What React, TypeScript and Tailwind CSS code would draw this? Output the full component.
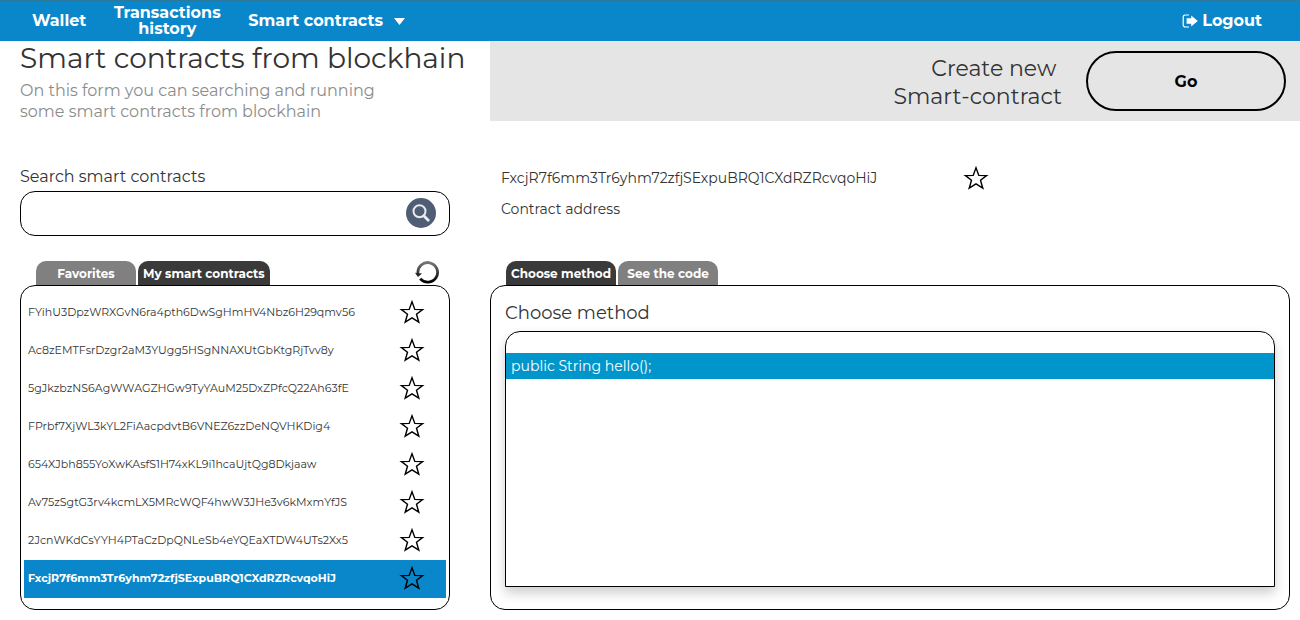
import { useState } from 'react';

const contracts = [
  'FYihU3DpzWRXGvN6ra4pth6DwSgHmHV4Nbz6H29qmv56',
  'Ac8zEMTFsrDzgr2aM3YUgg5HSgNNAXUtGbKtgRjTvv8y',
  '5gJkzbzNS6AgWWAGZHGw9TyYAuM25DxZPfcQ22Ah63fE',
  'FPrbf7XjWL3kYL2FiAacpdvtB6VNEZ6zzDeNQVHKDig4',
  '654XJbh855YoXwKAsfS1H74xKL9i1hcaUjtQg8Dkjaaw',
  'Av75zSgtG3rv4kcmLX5MRcWQF4hwW3JHe3v6kMxmYfJS',
  '2JcnWKdCsYYH4PTaCzDpQNLeSb4eYQEaXTDW4UTs2Xx5',
  'FxcjR7f6mm3Tr6yhm72zfjSExpuBRQ1CXdRZRcvqoHiJ',
];

const methods = ['public String hello();'];

const StarIcon = () => (
  <svg width="26" height="26" viewBox="0 0 26 26" fill="none" stroke="#000" strokeWidth="1.4">
    <path d="M13 2.8 L15.8 10.4 L23.6 10.6 L17.5 15.3 L19.8 23.2 L13 18.8 L6.2 23.2 L8.5 15.3 L2.4 10.6 L10.2 10.4 Z" />
  </svg>
);

const SearchIcon = () => (
  <svg width="30" height="30" viewBox="0 0 30 30" fill="none">
    <circle cx="15" cy="15" r="15" fill="#4f5d75" />
    <circle cx="13.5" cy="13.2" r="6" stroke="#e8ebf0" strokeWidth="2" />
    <path d="M17.8 17.8 L22.2 22.2" stroke="#e8ebf0" strokeWidth="2.8" strokeLinecap="round" />
  </svg>
);

const RefreshIcon = () => (
  <svg width="24" height="24" viewBox="0 0 24 24" fill="none">
    <defs>
      <linearGradient id="ring" x1="0" y1="0" x2="0" y2="1">
        <stop offset="0" stopColor="#777" />
        <stop offset="1" stopColor="#000" />
      </linearGradient>
    </defs>
    <path d="M3 12.4 A9.8 9.8 0 1 1 5.2 17.6" stroke="url(#ring)" strokeWidth="2.8" />
    <path d="M0 11.8 L7 12.6 L3 16 Z" fill="#222" />
  </svg>
);

const LogoutIcon = () => (
  <svg width="16" height="14" viewBox="0 0 16 14" fill="none">
    <path d="M7 1 H3.5 Q1.2 1 1.2 3.2 V10.8 Q1.2 13 3.5 13 H7" stroke="#fff" strokeWidth="1.2" />
    <path d="M4.6 4.2 H9.2 V1.6 L15.8 7 L9.2 12.4 V9.8 H4.6 Z" fill="#fff" />
  </svg>
);

type TabProps = {
  label: string;
  active: boolean;
  onClick: () => void;
};

const Tab = ({ label, active, onClick }: TabProps) => (
  <button
    type="button"
    role="tab"
    aria-selected={active}
    onClick={onClick}
    className={`h-6 min-w-[100px] rounded-t-[10px] px-[5px] pt-[2px] text-xs font-bold text-white ${
      active ? 'bg-[#3a3a3a]' : 'bg-[#808080]'
    }`}
  >
    {label}
  </button>
);

export default function App() {
  const [listTab, setListTab] = useState('my');
  const [methodTab, setMethodTab] = useState('method');
  const [selected, setSelected] = useState(contracts[7]);
  const [method, setMethod] = useState(methods[0]);

  return (
    <div className="bg-white font-['Montserrat',Inter,sans-serif] text-[#333]">
      {/* Header */}
      <header className="flex h-[41px] items-center justify-between border-t border-[#2b7a9c] bg-[#0a86ca] pr-[38px] pl-8 text-base leading-4 font-bold text-white">
        <nav className="flex items-center gap-[26px]">
          <a href="#wallet">Wallet</a>
          <a href="#history" className="w-[110px] text-center">
            Transactions history
          </a>
          <button type="button" className="flex items-center gap-[11px]">
            Smart contracts
            <svg width="11" height="7" viewBox="0 0 11 7" fill="#fff">
              <path d="M0 0 H11 L5.5 7 Z" />
            </svg>
          </button>
        </nav>
        <a href="#logout" className="flex items-center gap-1">
          <LogoutIcon />
          Logout
        </a>
      </header>

      <div className="flex gap-10 pl-5">
        {/* Contracts list */}
        <section className="w-[430px] shrink-0">
          <div className="h-20">
            <h1 className="text-[28px] leading-[34px] whitespace-nowrap">Smart contracts from blockhain</h1>
            <p className="w-[380px] pt-[5px] text-base leading-[21px] text-[#8c8c8c]">
              On this form you can searching and running some smart contracts from blockhain
            </p>
          </div>

          <label htmlFor="search" className="mt-11 block text-base leading-6">
            Search smart contracts
          </label>
          <div className="mt-[2px] flex h-[45px] items-center rounded-[15px] border border-black pr-[13px] pb-[2px] pl-3">
            <input id="search" type="text" className="min-w-0 flex-1 outline-none" />
            <button type="button" aria-label="Search">
              <SearchIcon />
            </button>
          </div>

          <div className="mt-[25px] flex items-end justify-between pr-[11px] pl-4">
            <div role="tablist" className="flex gap-[2px]">
              <Tab label="Favorites" active={listTab === 'fav'} onClick={() => setListTab('fav')} />
              <Tab label="My smart contracts" active={listTab === 'my'} onClick={() => setListTab('my')} />
            </div>
            <button type="button" aria-label="Refresh">
              <RefreshIcon />
            </button>
          </div>
          <ul className="rounded-[15px] border border-black px-[3px] pt-2 pb-[11px]">
            {contracts.map((id) => (
              <li
                key={id}
                className={`flex h-[38px] items-center justify-between pr-[21px] pb-[2px] pl-1 ${
                  id === selected ? 'bg-[#0a86ca] font-bold text-white' : ''
                }`}
              >
                <button type="button" onClick={() => setSelected(id)} className="text-[11px]">
                  {id}
                </button>
                <button type="button" aria-label="Add to favorites">
                  <StarIcon />
                </button>
              </li>
            ))}
          </ul>
        </section>

        {/* Selected contract */}
        <section className="flex min-w-0 flex-1 flex-col">
          <div className="flex h-20 items-center justify-end gap-6 bg-[#e5e5e5] pr-[14px]">
            <p className="pt-1 text-right text-[22px] leading-7">
              Create new&nbsp;
              <br />
              Smart-contract
            </p>
            <button
              type="button"
              className="h-[60px] w-[200px] rounded-full border-2 border-black pt-[2px] text-base font-bold text-black"
            >
              Go
            </button>
          </div>

          <div className="flex h-[140px] gap-[84px] pt-11 pl-[11px] text-sm">
            <div className="w-[378px]">
              <p className="leading-[26px]">{selected}</p>
              <p className="pt-1 leading-7">Contract address</p>
            </div>
            <button type="button" aria-label="Add to favorites" className="h-[26px]">
              <StarIcon />
            </button>
          </div>

          <div role="tablist" className="flex gap-[2px] pl-4">
            <Tab label="Choose method" active={methodTab === 'method'} onClick={() => setMethodTab('method')} />
            <Tab label="See the code" active={methodTab === 'code'} onClick={() => setMethodTab('code')} />
          </div>
          <div className="mr-[10px] flex flex-1 flex-col rounded-[15px] border border-black px-[14px] pt-[13px] pb-[22px]">
            <h2 className="text-lg leading-7">Choose method</h2>
            <ul className="mt-1 flex-1 rounded-t-[15px] border border-black pt-[21px] shadow-[0_6px_12px_rgba(0,0,0,0.2)]">
              {methods.map((m) => (
                <li key={m}>
                  <button
                    type="button"
                    onClick={() => setMethod(m)}
                    className={`h-[26px] w-full px-[5px] text-left text-sm ${
                      m === method ? 'bg-[#0096cc] text-white' : ''
                    }`}
                  >
                    {m}
                  </button>
                </li>
              ))}
            </ul>
          </div>
        </section>
      </div>
    </div>
  );
}
